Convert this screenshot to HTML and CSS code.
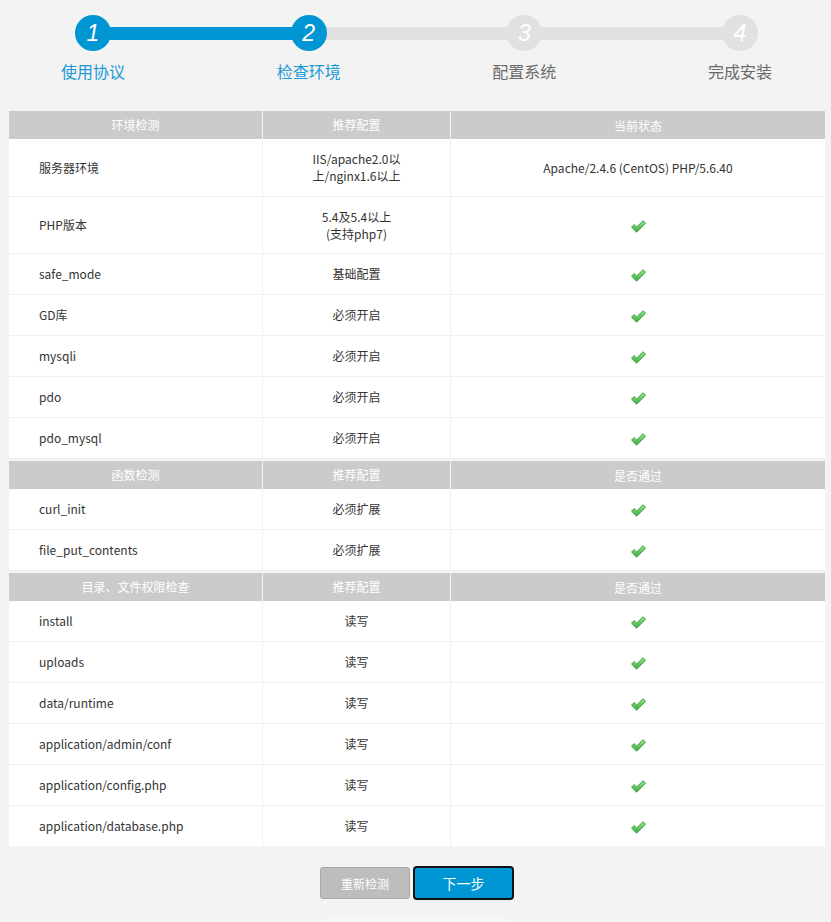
FILE: index.html
```html
<!DOCTYPE html>
<html lang="zh-CN">
<head>
<meta charset="utf-8">
<title>检查环境</title>
<link rel="stylesheet" href="styles.css">
</head>
<body>
<div class="stepper">
  <div class="circle done">1</div>
  <div class="bar done"></div>
  <div class="circle done">2</div>
  <div class="bar"></div>
  <div class="circle">3</div>
  <div class="bar"></div>
  <div class="circle">4</div>
  <div class="label done s1">使用协议</div>
  <div class="label done s2">检查环境</div>
  <div class="label s3">配置系统</div>
  <div class="label s4">完成安装</div>
</div>

<div class="checks">
  <div class="section">
    <div class="row head"><div class="c1">环境检测</div><div class="c2">推荐配置</div><div class="c3">当前状态</div></div>
    <div class="row tall"><div class="c1">服务器环境</div><div class="c2">IIS/apache2.0以<br>上/nginx1.6以上</div><div class="c3">Apache/2.4.6 (CentOS) PHP/5.6.40</div></div>
    <div class="row tall2"><div class="c1">PHP版本</div><div class="c2">5.4及5.4以上<br>(支持php7)</div><div class="c3"><svg class="ok" viewBox="0 0 14 12"><use href="#chk"/></svg></div></div>
    <div class="row"><div class="c1">safe_mode</div><div class="c2">基础配置</div><div class="c3"><svg class="ok" viewBox="0 0 14 12"><use href="#chk"/></svg></div></div>
    <div class="row"><div class="c1">GD库</div><div class="c2">必须开启</div><div class="c3"><svg class="ok" viewBox="0 0 14 12"><use href="#chk"/></svg></div></div>
    <div class="row"><div class="c1">mysqli</div><div class="c2">必须开启</div><div class="c3"><svg class="ok" viewBox="0 0 14 12"><use href="#chk"/></svg></div></div>
    <div class="row"><div class="c1">pdo</div><div class="c2">必须开启</div><div class="c3"><svg class="ok" viewBox="0 0 14 12"><use href="#chk"/></svg></div></div>
    <div class="row"><div class="c1">pdo_mysql</div><div class="c2">必须开启</div><div class="c3"><svg class="ok" viewBox="0 0 14 12"><use href="#chk"/></svg></div></div>
  </div>
  <div class="section">
    <div class="row head"><div class="c1">函数检测</div><div class="c2">推荐配置</div><div class="c3">是否通过</div></div>
    <div class="row"><div class="c1">curl_init</div><div class="c2">必须扩展</div><div class="c3"><svg class="ok" viewBox="0 0 14 12"><use href="#chk"/></svg></div></div>
    <div class="row"><div class="c1">file_put_contents</div><div class="c2">必须扩展</div><div class="c3"><svg class="ok" viewBox="0 0 14 12"><use href="#chk"/></svg></div></div>
  </div>
  <div class="section">
    <div class="row head"><div class="c1">目录、文件权限检查</div><div class="c2">推荐配置</div><div class="c3">是否通过</div></div>
    <div class="row"><div class="c1">install</div><div class="c2">读写</div><div class="c3"><svg class="ok" viewBox="0 0 14 12"><use href="#chk"/></svg></div></div>
    <div class="row"><div class="c1">uploads</div><div class="c2">读写</div><div class="c3"><svg class="ok" viewBox="0 0 14 12"><use href="#chk"/></svg></div></div>
    <div class="row"><div class="c1">data/runtime</div><div class="c2">读写</div><div class="c3"><svg class="ok" viewBox="0 0 14 12"><use href="#chk"/></svg></div></div>
    <div class="row"><div class="c1">application/admin/conf</div><div class="c2">读写</div><div class="c3"><svg class="ok" viewBox="0 0 14 12"><use href="#chk"/></svg></div></div>
    <div class="row"><div class="c1">application/config.php</div><div class="c2">读写</div><div class="c3"><svg class="ok" viewBox="0 0 14 12"><use href="#chk"/></svg></div></div>
    <div class="row last"><div class="c1">application/database.php</div><div class="c2">读写</div><div class="c3"><svg class="ok" viewBox="0 0 14 12"><use href="#chk"/></svg></div></div>
  </div>
</div>

<div class="actions">
  <button class="btn gray" type="button">重新检测</button>
  <button class="btn blue" type="button">下一步</button>
</div>
<div class="footer"></div>

<svg class="defs" width="0" height="0" aria-hidden="true">
  <defs>
    <linearGradient id="g" x1="0" y1="0" x2="0" y2="1">
      <stop offset="0" stop-color="#95e58f"/>
      <stop offset="1" stop-color="#3aae3c"/>
    </linearGradient>
    <symbol id="chk" viewBox="0 0 14 12">
      <path d="M0.5 6.6 L2.9 4.2 L5.3 6.5 L11.3 0.6 L13.6 2.9 L5.3 11.3 Z" fill="url(#g)" stroke="#3d9c3e" stroke-width="0.9" stroke-linejoin="round"/>
    </symbol>
  </defs>
</svg>
</body>
</html>
```
FILE: styles.css
```css
html, body {
  margin: 0;
  padding: 0;
}
body {
  background: #f3f3f3;
  font-family: "Noto Sans CJK SC", "Noto Sans", sans-serif;
  font-size: 12px;
  color: #333;
}

.stepper {
  display: grid;
  grid-template-columns: 36px 1fr 36px 1fr 36px 1fr 36px;
  grid-template-rows: 36px 22px;
  row-gap: 9px;
  margin: 15px 73px 0 75px;
}
.circle {
  grid-row: 1;
  width: 36px;
  height: 36px;
  border-radius: 50%;
  background: #e1e1e1;
  color: #fff;
  font-family: "Liberation Sans", Arial, sans-serif;
  font-style: italic;
  font-size: 23px;
  line-height: 36px;
  text-align: center;
  position: relative;
  z-index: 1;
}
.circle.done {
  background: #0096d4;
}
.bar {
  grid-row: 1;
  align-self: center;
  height: 13px;
  margin: 0 -4px;
  background: #e1e1e1;
}
.bar.done {
  background: #0096d4;
}
.label {
  grid-row: 2;
  justify-self: center;
  white-space: nowrap;
  font-size: 16px;
  line-height: 22px;
  color: #6a6a6a;
}
.label.done {
  color: #1b9ad5;
}
.s1 { grid-column: 1; }
.s2 { grid-column: 3; }
.s3 { grid-column: 5; }
.s4 { grid-column: 7; }

.checks {
  margin: 29px 6px 0 9px;
}
.section {
  margin-bottom: 2px;
}
.section:last-child {
  margin-bottom: 0;
}
.row {
  display: grid;
  grid-template-columns: 253px 187px 1fr;
  column-gap: 1px;
  background: #f0f0f0;
  border-bottom: 1px solid #f0f0f0;
}
.row > div {
  background: #fff;
  height: 40px;
  display: flex;
  align-items: center;
  justify-content: center;
  text-align: center;
  line-height: 17px;
  padding-bottom: 1px;
  box-sizing: border-box;
}
.row > .c1 {
  justify-content: flex-start;
  text-align: left;
  padding-left: 30px;
}
.row.tall > div {
  height: 57px;
}
.row.tall2 > div {
  height: 56px;
}
.row.last {
  border-bottom: 0;
}
.row.head {
  background: #f4f4f4;
  border-bottom: 0;
}
.row.head > div {
  height: 28px;
  background: #cbcbcb;
  color: #fff;
  justify-content: center;
  padding-left: 0;
}

.row > .c3 {
  padding-bottom: 0;
}
.ok {
  width: 15px;
  height: 13px;
  display: block;
  margin: 2px 0 0 1px;
}
.defs {
  position: absolute;
  width: 0;
  height: 0;
}

.actions {
  display: flex;
  justify-content: center;
  align-items: center;
  gap: 3px;
  margin-top: 20px;
  padding-left: 3px;
}
.btn {
  font-family: "Noto Sans CJK SC", "Noto Sans", sans-serif;
  color: #fff;
  cursor: pointer;
  padding: 0;
}
.btn.gray {
  width: 90px;
  height: 32px;
  background: #bdbdbd;
  border: 1px solid #a8a8a8;
  border-radius: 3px;
  font-size: 12px;
}
.btn.blue {
  width: 101px;
  height: 34px;
  background: #0096d4;
  border: 2px solid #111;
  border-radius: 4px;
  font-size: 14px;
}
.footer {
  width: 188px;
  height: 20px;
  margin: 18px auto 0;
  padding-left: 3px;
  background: #f6f6f6;
  border-radius: 4px;
}
```
